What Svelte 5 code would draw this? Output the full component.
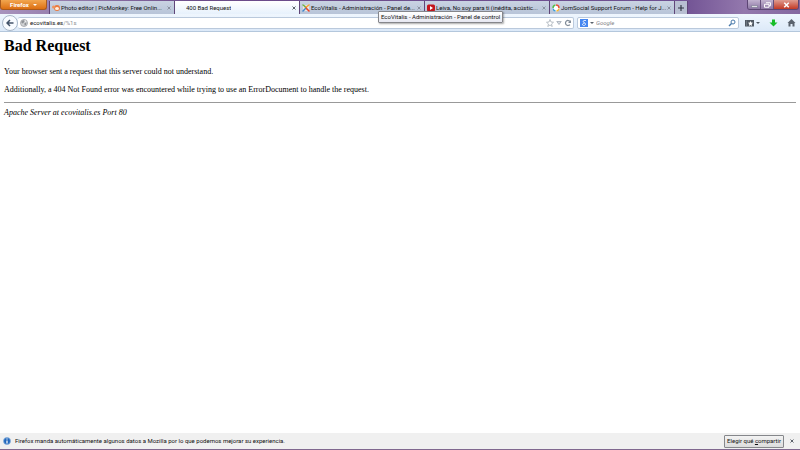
<script lang="ts">
  const tabs = [
    { title: 'Photo editor | PicMonkey: Free Onlin...', icon: 'monkey' },
    { title: '400 Bad Request', icon: '' },
    { title: 'EcoVitalis - Administración - Panel de...', icon: 'joomla' },
    { title: 'Leiva, No soy para ti (inédita, acústic...', icon: 'video' },
    { title: 'JomSocial Support Forum - Help for J...', icon: 'social' }
  ];

  let active = $state(1);
  let address = $state('ecovitalis.es/%1s');
  let search = $state('');
  let noticeOpen = $state(true);
</script>

<div class="browser">
  <header class="titlebar">
    <button class="menu-button">Firefox <span class="caret"></span></button>
    <nav class="tabs" aria-label="Tabs">
      {#each tabs as tab, i}
        <div class="tab" class:active={i === active}>
          <button class="tab-title" onclick={() => (active = i)}>
            <svg class="favicon" viewBox="0 0 16 16" aria-hidden="true">
              {#if tab.icon === 'monkey'}
                <ellipse cx="10" cy="8" rx="6" ry="6" fill="#ea7a40" />
                <circle cx="3" cy="6" r="3" fill="#f0935c" />
                <ellipse cx="10" cy="9" rx="4" ry="3" fill="#fff0df" />
              {:else if tab.icon === 'joomla'}
                <circle cx="8" cy="8" r="6" fill="#f3e9e2" />
                <g fill="none" stroke-width="3" stroke-linecap="round" stroke-linejoin="round">
                  <path d="M2 2l3 2 4 5" stroke="#6cb33f" />
                  <path d="M14 2l-3 2-4 4" stroke="#f9a030" />
                  <path d="M14 14l-3-3-3-3" stroke="#ee4023" />
                  <path d="M2 14l3-3 2-2" stroke="#3f86cb" />
                </g>
              {:else if tab.icon === 'video'}
                <rect x="0" y="1" width="16" height="14" rx="3" fill="#c4161c" />
                <path d="M6 4v8l6-4z" fill="#fff" />
              {:else if tab.icon === 'social'}
                <circle cx="8" cy="8" r="7" fill="#fff" />
                <g fill="none" stroke-width="3">
                  <path d="M2 8a6 6 0 0 1 5-6" stroke="#54b948" />
                  <path d="M8 2a6 6 0 0 1 6 6" stroke="#e94e3c" />
                  <path d="M14 9a6 6 0 0 1-5 5" stroke="#f7b52c" />
                  <path d="M7 14a6 6 0 0 1-5-5" stroke="#3c9ad6" />
                </g>
              {/if}
            </svg>
            <span>{tab.title}</span>
          </button>
          <button class="close" aria-label="Close tab">
            <svg viewBox="0 0 8 8"><path d="M1 1l6 6M7 1L1 7" /></svg>
          </button>
          {#if tab.icon === 'joomla'}
            <div class="tooltip" role="tooltip">EcoVitalis - Administración - Panel de control</div>
          {/if}
        </div>
      {/each}
      <button class="new-tab" aria-label="New tab">
        <svg viewBox="0 0 8 8"><path d="M4 0v8M0 4h8" /></svg>
      </button>
    </nav>
    <div class="window-controls">
      <button aria-label="Minimize"><svg viewBox="0 0 12 8"><path d="M2 5h8v2H2z" fill="#fff" stroke="#555a70" stroke-width=".6" /></svg></button>
      <button aria-label="Restore"><svg viewBox="0 0 12 8"><path d="M4 1h6v4H8M2 3h6v4H2z" fill="none" stroke="#fff" stroke-width="1.300" /></svg></button>
      <button class="quit" aria-label="Close window"><svg viewBox="0 0 12 8"><path d="M3 1l6 6M9 1L3 7" stroke="#fff" stroke-width="2" /></svg></button>
    </div>
  </header>

  <div class="toolbar">
    <button class="back" aria-label="Back">
      <svg viewBox="0 0 16 16"><path d="M8 2L2 8l6 6M3 8h12" fill="none" stroke="#43536a" stroke-width="3" /></svg>
    </button>
    <div class="field location">
      <svg class="globe" viewBox="0 0 16 16" aria-hidden="true">
        <circle cx="8" cy="8" r="7" fill="#d2d4d6" stroke="#9b9ea1" stroke-width="1.500" />
        <path d="M3 4l4-2 2 3-3 4-3-1zM9 8l4-1-1 5-3 1z" fill="#8f9296" />
        <path d="M10 2l3 3-3 1z" fill="#f4f4f4" />
      </svg>
      <div class="address">
        <input aria-label="Address" bind:value={address} />
        <span class="address-text" aria-hidden="true">{address.split('/')[0]}<i>{address.slice(address.split('/')[0].length)}</i></span>
      </div>
      <button class="icon" aria-label="Bookmark this page">
        <svg viewBox="0 0 16 16"><path d="M8 1l2 5 5 .5-4 3.500 1.500 5L8 12l-4.500 3L5 10 1 6.500 6 6z" fill="#fff" stroke="#a4acb6" stroke-width="1.500" /></svg>
      </button>
      <button class="icon small" aria-label="History">
        <svg viewBox="0 0 8 8"><path d="M1 2h6L4 6z" fill="#d5dae0" stroke="#9da7b3" /></svg>
      </button>
      <button class="icon" aria-label="Reload">
        <svg viewBox="0 0 16 16"><path d="M12 11a5 5 0 1 1 0-6" fill="none" stroke="#818c99" stroke-width="2.500" /><path d="M8 8h6V2z" fill="#818c99" /></svg>
      </button>
    </div>
    <div class="field search">
      <button class="engine" aria-label="Search engine">
        <svg viewBox="0 0 16 16">
          <rect width="16" height="16" fill="#4687f1" />
          <path d="M12 3H8a2 2 0 1 0 1 4c1 1 2 2 2 3 0 4-6 4-6 1 0-2 2-2 4-2" fill="none" stroke="#fff" stroke-width="1.600" />
        </svg>
        <span class="caret"></span>
      </button>
      <input aria-label="Search" placeholder="Google" bind:value={search} />
      <button class="icon" aria-label="Search">
        <svg viewBox="0 0 16 16"><circle cx="10" cy="6" r="4" fill="#fff" stroke="#4778aa" stroke-width="2" /><path d="M7 9l-5 5" stroke="#4778aa" stroke-width="3" /></svg>
      </button>
    </div>
    <button class="tool bookmarks" aria-label="Bookmarks">
      <svg viewBox="0 0 18 16">
        <path d="M0 2h18v13H0z" fill="#515963" />
        <path d="M3 3v12" stroke="#8a929c" />
        <path d="M11 4l1.500 3 3.500.5-2.500 2.500.5 4-3-2-3 2 .5-4L6 7.500 9.500 7z" fill="#fff" />
      </svg>
      <span class="caret"></span>
    </button>
    <button class="tool" aria-label="Downloads">
      <svg viewBox="0 0 16 16"><path d="M5 1h6v6h5l-8 8-8-8h5z" fill="#18bd28" /></svg>
    </button>
    <button class="tool" aria-label="Home">
      <svg viewBox="0 0 16 16"><path d="M8 0l8 8h-2v7h-4v-5H6v5H2V8H0z" fill="#5a626d" /></svg>
    </button>
  </div>

  <main>
    <h1>Bad Request</h1>
    <p>Your browser sent a request that this server could not understand.</p>
    <p>Additionally, a 404 Not Found error was encountered while trying to use an ErrorDocument to handle the request.</p>
    <hr />
    <address>Apache Server at ecovitalis.es Port 80</address>
  </main>

  {#if noticeOpen}
    <footer>
      <svg class="info" viewBox="0 0 16 16" aria-hidden="true">
        <circle cx="8" cy="8" r="7" fill="#2167bd" stroke="#8bb1dc" stroke-width="1.500" />
        <path d="M8 3v2M8 7v6" stroke="#fff" stroke-width="2.500" />
      </svg>
      <span class="message">Firefox manda automáticamente algunos datos a Mozilla por lo que podemos mejorar su experiencia.</span>
      <button class="choose">Elegir qué <u>c</u>ompartir</button>
      <button class="close dark" aria-label="Close notice" onclick={() => (noticeOpen = false)}>
        <svg viewBox="0 0 8 8"><path d="M1 1l6 6M7 1L1 7" /></svg>
      </button>
    </footer>
  {/if}
</div>

<style>
  :global(body) {
    background: #fff;
  }

  .browser {
    display: flex;
    flex-direction: column;
    min-height: 100vh;
    box-sizing: border-box;
    border-bottom: 1px solid #80688f;
    font: 6px/10px Roboto, 'Noto Sans', sans-serif;
    color: #111;
  }

  button,
  input {
    box-sizing: border-box;
    margin: 0;
    padding: 0;
    border: 0;
    background: none;
    font: inherit;
    color: inherit;
  }

  svg {
    display: block;
    flex: none;
  }

  .titlebar {
    display: flex;
    align-items: flex-start;
    height: 14px;
    background: linear-gradient(90deg, #a893bd 0, #6b4b89 25%, #6f5092 85%, #9378ad 93%, #8567a0 100%);
  }

  .menu-button {
    display: flex;
    align-items: center;
    justify-content: center;
    gap: 4px;
    width: 47px;
    height: 10px;
    margin-right: 2px;
    border: 1px solid #a85a1d;
    border-top: 0;
    border-radius: 0 0 3px 3px;
    background: linear-gradient(#f2a64f, #dc6f12);
    color: #fff;
    font-weight: 700;
  }

  .caret {
    border: 2px solid transparent;
    border-top-color: currentColor;
    border-bottom: 0;
  }

  .tabs {
    display: flex;
    flex: 1;
    min-width: 0;
    height: 13px;
    margin-top: 1px;
  }

  .tab {
    position: relative;
    display: flex;
    flex: 0 1 125px;
    align-items: center;
    min-width: 0;
    box-sizing: border-box;
    border-left: 1px solid #604679;
    background: linear-gradient(#c9d3e2, #b8c4d8);
  }

  .tab.active {
    background: linear-gradient(#fff, #e7f1fc);
  }

  .tab-title {
    display: flex;
    flex: 1;
    align-items: center;
    gap: 1px;
    min-width: 0;
    height: 13px;
    padding-left: 2px;
    text-align: left;
    white-space: nowrap;
  }

  .tab-title span {
    overflow: hidden;
  }

  .favicon {
    width: 8px;
    height: 8px;
  }

  .close {
    flex: none;
    padding: 4px 3px 4px 1px;
  }

  .close svg {
    width: 4px;
    height: 4px;
    stroke: #8a92a0;
    stroke-width: 2;
  }

  .active .close svg,
  .dark svg {
    stroke: #5c626b;
  }

  .tooltip {
    position: absolute;
    z-index: 2;
    top: 10px;
    left: 78px;
    padding: 0 2px;
    border: 1px solid #85868b;
    border-radius: 1px;
    background: linear-gradient(#fff, #e7e8f2);
    box-shadow: 1px 1px 2px #0005;
    white-space: nowrap;
  }

  .new-tab {
    width: 14px;
    padding: 0 3px;
    border-left: 1px solid #604679;
    border-right: 1px solid #604679;
    background: #b8bfd2;
  }

  .new-tab svg {
    width: 6px;
    height: 6px;
    stroke: #2e3542;
    stroke-width: 1.500;
  }

  .window-controls {
    display: flex;
    height: 9px;
    margin-right: 1px;
    border: 1px solid #5c4674;
    border-top: 0;
    border-radius: 0 0 3px 3px;
    overflow: hidden;
  }

  .window-controls button {
    display: flex;
    align-items: center;
    justify-content: center;
    width: 13px;
    border-right: 1px solid #66507c;
    background: linear-gradient(#c2b3d0, #8c76a4);
  }

  .window-controls svg {
    width: 9px;
    height: 6px;
  }

  .window-controls .quit {
    width: 24px;
    border: 0;
    background: linear-gradient(#df9c90, #c33a25);
  }

  .toolbar {
    display: flex;
    align-items: center;
    height: 17px;
    padding-right: 4px;
    border-bottom: 1px solid #b4c7dc;
    background: linear-gradient(#eff6fe, #dce9f8);
  }

  .back {
    display: flex;
    align-items: center;
    justify-content: center;
    width: 16px;
    height: 16px;
    margin-left: 2px;
    border: 1px solid #a8b7c9;
    border-radius: 50%;
    background: #f8fbff;
  }

  .back svg {
    width: 8px;
    height: 8px;
  }

  .field {
    display: flex;
    align-items: center;
    height: 12px;
    box-sizing: border-box;
    border: 1px solid #bac9dc;
    border-radius: 2px;
    background: #fff;
  }

  .field input {
    display: block;
    width: 100%;
    min-width: 0;
    height: 10px;
    outline: 0;
  }

  .field input::placeholder {
    color: #7f8287;
    font-style: italic;
    opacity: 1;
  }

  .location {
    flex: 1;
    gap: 2px;
    margin-right: 3px;
    padding: 0 1px 0 2px;
    border-left: 0;
  }

  .globe {
    width: 8px;
    height: 8px;
  }

  .address {
    position: relative;
    flex: 1;
  }

  .address input {
    color: transparent;
    caret-color: #111;
  }

  .address-text {
    position: absolute;
    inset: 0;
    pointer-events: none;
  }

  .address-text i {
    color: #8c9095;
    font-style: normal;
  }

  .icon svg {
    width: 8px;
    height: 8px;
  }

  .icon.small svg {
    width: 6px;
    height: 6px;
  }

  .search {
    gap: 2px;
    flex: 0 1 162px;
    padding: 0 2px;
  }

  .engine {
    display: flex;
    align-items: center;
    gap: 2px;
    color: #59616b;
  }

  .engine svg {
    width: 8px;
    height: 8px;
  }

  .tool {
    display: flex;
    align-items: center;
    gap: 2px;
    margin-left: 9px;
    color: #4d5661;
  }

  .tool.bookmarks {
    margin-left: 6px;
  }

  .tool svg {
    width: 9px;
    height: 8px;
  }

  main {
    flex: 1;
    padding: 5px 4px;
    font: 8px/10px 'Liberation Serif', 'Times New Roman', serif;
    color: #000;
  }

  h1 {
    margin: 0 0 12px;
    font-size: 16px;
    line-height: 18px;
  }

  p {
    margin: 0 0 8px;
  }

  hr {
    margin: -1px 0 5px;
    border: 0;
    border-top: 1px solid #999;
  }

  footer {
    display: flex;
    align-items: center;
    height: 16px;
    padding: 0 3px;
    background: #f0f0f0;
  }

  .info {
    width: 8px;
    height: 8px;
    margin-right: 4px;
  }

  .message {
    flex: 1;
  }

  .choose {
    height: 13px;
    margin-right: 5px;
    padding: 0 2px;
    border: 1px solid #85878b;
    border-radius: 1px;
    background: linear-gradient(#f3f3f3, #dcdcdc);
  }
</style>
